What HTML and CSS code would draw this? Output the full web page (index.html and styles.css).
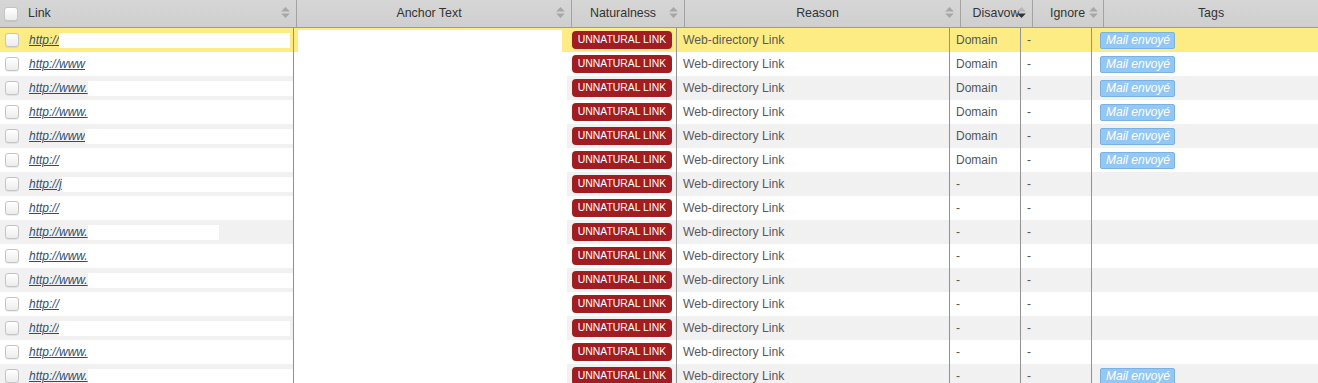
FILE: index.html
```html
<!DOCTYPE html>
<html>
<head>
<meta charset="utf-8">
<link rel="stylesheet" href="styles.css">
</head>
<body>
<div class="grid">
  <div class="head">
    <div class="hc h-link"><span class="cb"></span><span class="ht">Link</span><svg class="sort" viewBox="0 0 10 12"><path d="M1 5 L5 1 L9 5 Z M1 7 L9 7 L5 11 Z"/></svg></div>
    <div class="hc h-anchor"><span class="ht">Anchor Text</span><svg class="sort" viewBox="0 0 10 12"><path d="M1 5 L5 1 L9 5 Z M1 7 L9 7 L5 11 Z"/></svg></div>
    <div class="hc h-nat"><span class="ht">Naturalness</span><svg class="sort" viewBox="0 0 10 12"><path d="M1 5 L5 1 L9 5 Z M1 7 L9 7 L5 11 Z"/></svg></div>
    <div class="hc h-reason"><span class="ht">Reason</span><svg class="sort" viewBox="0 0 10 12"><path d="M1 5 L5 1 L9 5 Z M1 7 L9 7 L5 11 Z"/></svg></div>
    <div class="hc h-dis"><span class="ht">Disavow</span><svg class="sort active" viewBox="0 0 10 12"><path class="up" d="M1 5 L5 1 L9 5 Z"/><path class="dn" d="M1 7 L9 7 L5 11 Z"/></svg></div>
    <div class="hc h-ign"><span class="ht">Ignore</span><svg class="sort" viewBox="0 0 10 12"><path d="M1 5 L5 1 L9 5 Z M1 7 L9 7 L5 11 Z"/></svg></div>
    <div class="hc h-tags"><span class="ht">Tags</span></div>
  </div>
  <div class="rows" id="rows">
    <div class="row sel">
      <div class="c c-link"><span class="cb"></span><a class="url">http://</a><span class="mask" style="width:231px"></span></div>
      <div class="c c-anchor"><span class="amask"></span></div>
      <div class="c c-nat"><span class="badge">UNNATURAL LINK</span></div>
      <div class="c c-reason">Web-directory Link</div>
      <div class="c c-dis">Domain</div>
      <div class="c c-ign">-</div>
      <div class="c c-tags"><span class="tag">Mail envoyé</span></div>
    </div>
    <div class="row">
      <div class="c c-link"><span class="cb"></span><a class="url">http://www</a></div>
      <div class="c c-anchor"></div>
      <div class="c c-nat"><span class="badge">UNNATURAL LINK</span></div>
      <div class="c c-reason">Web-directory Link</div>
      <div class="c c-dis">Domain</div>
      <div class="c c-ign">-</div>
      <div class="c c-tags"><span class="tag">Mail envoyé</span></div>
    </div>
    <div class="row alt">
      <div class="c c-link"><span class="cb"></span><a class="url">http://www.</a><span class="mask" style="width:207px"></span></div>
      <div class="c c-anchor"></div>
      <div class="c c-nat"><span class="badge">UNNATURAL LINK</span></div>
      <div class="c c-reason">Web-directory Link</div>
      <div class="c c-dis">Domain</div>
      <div class="c c-ign">-</div>
      <div class="c c-tags"><span class="tag">Mail envoyé</span></div>
    </div>
    <div class="row">
      <div class="c c-link"><span class="cb"></span><a class="url">http://www.</a></div>
      <div class="c c-anchor"></div>
      <div class="c c-nat"><span class="badge">UNNATURAL LINK</span></div>
      <div class="c c-reason">Web-directory Link</div>
      <div class="c c-dis">Domain</div>
      <div class="c c-ign">-</div>
      <div class="c c-tags"><span class="tag">Mail envoyé</span></div>
    </div>
    <div class="row alt">
      <div class="c c-link"><span class="cb"></span><a class="url">http://www</a><span class="mask" style="width:209px"></span></div>
      <div class="c c-anchor"></div>
      <div class="c c-nat"><span class="badge">UNNATURAL LINK</span></div>
      <div class="c c-reason">Web-directory Link</div>
      <div class="c c-dis">Domain</div>
      <div class="c c-ign">-</div>
      <div class="c c-tags"><span class="tag">Mail envoyé</span></div>
    </div>
    <div class="row">
      <div class="c c-link"><span class="cb"></span><a class="url">http://</a></div>
      <div class="c c-anchor"></div>
      <div class="c c-nat"><span class="badge">UNNATURAL LINK</span></div>
      <div class="c c-reason">Web-directory Link</div>
      <div class="c c-dis">Domain</div>
      <div class="c c-ign">-</div>
      <div class="c c-tags"><span class="tag">Mail envoyé</span></div>
    </div>
    <div class="row alt">
      <div class="c c-link"><span class="cb"></span><a class="url">http://j</a><span class="mask" style="width:231px"></span></div>
      <div class="c c-anchor"></div>
      <div class="c c-nat"><span class="badge">UNNATURAL LINK</span></div>
      <div class="c c-reason">Web-directory Link</div>
      <div class="c c-dis">-</div>
      <div class="c c-ign">-</div>
      <div class="c c-tags"></div>
    </div>
    <div class="row">
      <div class="c c-link"><span class="cb"></span><a class="url">http://</a></div>
      <div class="c c-anchor"></div>
      <div class="c c-nat"><span class="badge">UNNATURAL LINK</span></div>
      <div class="c c-reason">Web-directory Link</div>
      <div class="c c-dis">-</div>
      <div class="c c-ign">-</div>
      <div class="c c-tags"></div>
    </div>
    <div class="row alt">
      <div class="c c-link"><span class="cb"></span><a class="url">http://www.</a><span class="mask" style="width:131px"></span></div>
      <div class="c c-anchor"></div>
      <div class="c c-nat"><span class="badge">UNNATURAL LINK</span></div>
      <div class="c c-reason">Web-directory Link</div>
      <div class="c c-dis">-</div>
      <div class="c c-ign">-</div>
      <div class="c c-tags"></div>
    </div>
    <div class="row">
      <div class="c c-link"><span class="cb"></span><a class="url">http://www.</a></div>
      <div class="c c-anchor"></div>
      <div class="c c-nat"><span class="badge">UNNATURAL LINK</span></div>
      <div class="c c-reason">Web-directory Link</div>
      <div class="c c-dis">-</div>
      <div class="c c-ign">-</div>
      <div class="c c-tags"></div>
    </div>
    <div class="row alt">
      <div class="c c-link"><span class="cb"></span><a class="url">http://www.</a><span class="mask" style="width:207px"></span></div>
      <div class="c c-anchor"></div>
      <div class="c c-nat"><span class="badge">UNNATURAL LINK</span></div>
      <div class="c c-reason">Web-directory Link</div>
      <div class="c c-dis">-</div>
      <div class="c c-ign">-</div>
      <div class="c c-tags"></div>
    </div>
    <div class="row">
      <div class="c c-link"><span class="cb"></span><a class="url">http://</a></div>
      <div class="c c-anchor"></div>
      <div class="c c-nat"><span class="badge">UNNATURAL LINK</span></div>
      <div class="c c-reason">Web-directory Link</div>
      <div class="c c-dis">-</div>
      <div class="c c-ign">-</div>
      <div class="c c-tags"></div>
    </div>
    <div class="row alt">
      <div class="c c-link"><span class="cb"></span><a class="url">http://</a><span class="mask" style="width:231px"></span></div>
      <div class="c c-anchor"></div>
      <div class="c c-nat"><span class="badge">UNNATURAL LINK</span></div>
      <div class="c c-reason">Web-directory Link</div>
      <div class="c c-dis">-</div>
      <div class="c c-ign">-</div>
      <div class="c c-tags"></div>
    </div>
    <div class="row">
      <div class="c c-link"><span class="cb"></span><a class="url">http://www.</a></div>
      <div class="c c-anchor"></div>
      <div class="c c-nat"><span class="badge">UNNATURAL LINK</span></div>
      <div class="c c-reason">Web-directory Link</div>
      <div class="c c-dis">-</div>
      <div class="c c-ign">-</div>
      <div class="c c-tags"></div>
    </div>
    <div class="row alt">
      <div class="c c-link"><span class="cb"></span><a class="url">http://www.</a><span class="mask" style="width:209px"></span></div>
      <div class="c c-anchor"></div>
      <div class="c c-nat"><span class="badge">UNNATURAL LINK</span></div>
      <div class="c c-reason">Web-directory Link</div>
      <div class="c c-dis">-</div>
      <div class="c c-ign">-</div>
      <div class="c c-tags"><span class="tag">Mail envoyé</span></div>
    </div>
  </div>
</div>
</body>
</html>
```

FILE: styles.css
```css
html, body {
  margin: 0;
  padding: 0;
  background: #fff;
  overflow: hidden;
}
body {
  width: 1318px;
  height: 383px;
  font-family: "Liberation Sans", Arial, sans-serif;
  font-size: 12px;
  color: #555;
}
.grid {
  width: 1318px;
}
.head {
  display: grid;
  grid-template-columns: 297px 275px 113px 276px 72px 71px 214px;
  height: 27px;
  background: linear-gradient(#d6d6d6, #cfcfcf);
  border-bottom: 1px solid #9a9a9a;
}
.hc {
  display: flex;
  align-items: center;
  justify-content: center;
  border-right: 1px solid #a3a3a3;
  color: #333;
  font-size: 12.4px;
  padding-right: 5px;
  padding-left: 6px;
  min-width: 0;
  position: relative;
}
.hc:last-child { border-right: none; padding: 0; }
.h-link {
  justify-content: flex-start;
  padding-left: 4px;
}
.h-link .ht { margin-left: 10px; flex: 1; }
.hc .ht { line-height: 14px; margin-top: -2px; }
.h-anchor .ht, .h-nat .ht, .h-reason .ht { flex: 1; text-align: center; }
.h-dis .ht { margin-left: 6px; }
.h-ign .ht { margin-left: 12px; }
.sort {
  width: 11px;
  height: 13px;
  fill: #a7a7a7;
  flex: none;
  margin-top: -3px;
}
.sort.active { margin-left: -3px; }
.sort.active .up { fill: #b6b6b6; }
.sort.active .dn { fill: #333; }
.h-ign .sort { margin-left: 3px; }
.h-tags .ht { margin-left: 0; }

.cb {
  display: inline-block;
  width: 12px;
  height: 12px;
  border: 1px solid #c4c4c4;
  border-radius: 3px;
  background: linear-gradient(#ffffff, #ececec);
  box-shadow: 0 1px 0 rgba(0,0,0,0.06);
  flex: none;
}
.rows { display: flex; flex-direction: column; }
.row {
  display: grid;
  grid-template-columns: 294px 273px 110px 273px 71px 71px 226px;
  height: 24px;
  background: #fff;
}
.row.alt { background: #f1f1f1; }
.row.sel { background: #fdec83; }
.c {
  display: flex;
  align-items: center;
  min-width: 0;
  overflow: hidden;
  white-space: nowrap;
  border-right: 1px solid #929292;
}
.c-anchor { border-right: none; background: #fff; }
.row.sel .c-anchor { background: transparent; align-items: flex-end; padding: 0 5px 0 4px; }
.amask { display: block; width: 100%; height: 22px; background: #fff; }
.c-nat { border-right: 1px solid #929292; padding-left: 5px; }
.c-tags { border-right: none; padding-left: 8px; }
.c-link { padding-left: 5px; }
.c-link .cb { margin-right: 10px; }
.url {
  color: #2f4f70;
  font-style: italic;
  text-decoration: underline;
  font-size: 12px;
}
.mask {
  display: inline-block;
  height: 15px;
  background: #fff;
}
.c-reason { padding-left: 6px; color: #5a5a5a; font-size: 12.2px; }
.c-dis, .c-ign { padding-left: 6px; color: #555; }
.badge {
  display: inline-block;
  width: 100px;
  height: 18px;
  line-height: 18px;
  text-align: center;
  background: #a01d21;
  color: #fff;
  font-size: 10.4px;
  border-radius: 4px;
}
.tag {
  display: inline-block;
  height: 15px;
  line-height: 15px;
  padding: 0 4px 0 5px;
  background: #92c8f3;
  border: 1px solid #79b1e2;
  border-radius: 2px;
  color: #fff;
  font-style: italic;
  font-size: 12px;
}
```
